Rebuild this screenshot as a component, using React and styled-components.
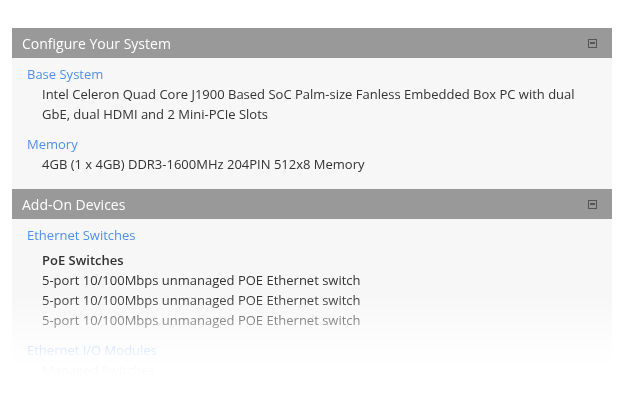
import React from "react";
import styled, { createGlobalStyle } from "styled-components";

const Global = createGlobalStyle`
  html, body { margin: 0; padding: 0; background: #fff; }
  body { font-family: "Open Sans", "Liberation Sans", sans-serif; }
`;

const Page = styled.div`
  height: 400px;
  overflow: hidden;
  padding: 28px 13px 0 12px;
  box-sizing: border-box;
  -webkit-mask-image: linear-gradient(to bottom, #000 0, #000 295px, rgba(0,0,0,0.35) 335px, rgba(0,0,0,0.08) 358px, rgba(0,0,0,0.015) 372px, transparent 388px);
  mask-image: linear-gradient(to bottom, #000 0, #000 295px, rgba(0,0,0,0.35) 335px, rgba(0,0,0,0.08) 358px, rgba(0,0,0,0.015) 372px, transparent 388px);
`;

const Panel = styled.div`
  background: #f7f7f7;
`;

const Header = styled.div`
  display: flex;
  align-items: center;
  justify-content: space-between;
  height: 30px;
  padding: 0 15px 0 10px;
  background: #999999;
  color: #fff;
  font-size: 14px;
`;

const Toggle = styled.span`
  display: flex;
  align-items: center;
  justify-content: center;
  width: 7px;
  height: 7px;
  border: 1px solid #555;
  &::after {
    content: "";
    width: 5px;
    height: 2px;
    background: #555;
  }
`;

const Body = styled.div`
  padding: 6px 15px 15px 15px;
`;

const Group = styled.div`
  & + & { margin-top: 10px; }
`;

const Label = styled.div`
  color: #4f8ff0;
  font-size: 13px;
  line-height: 20px;
`;

const Item = styled.div`
  padding-left: 15px;
  color: #333;
  font-size: 13px;
  line-height: 20px;
  font-weight: ${p => (p.bold ? 600 : 400)};
  margin-top: ${p => (p.gap ? "5px" : "0")};
`;

const sections = [
  {
    title: "Configure Your System",
    groups: [
      {
        label: "Base System",
        items: [
          { text: "Intel Celeron Quad Core J1900 Based SoC Palm-size Fanless Embedded Box PC with dual GbE, dual HDMI and 2 Mini-PCIe Slots" },
        ],
      },
      {
        label: "Memory",
        items: [{ text: "4GB (1 x 4GB) DDR3-1600MHz 204PIN 512x8 Memory" }],
      },
    ],
  },
  {
    title: "Add-On Devices",
    groups: [
      {
        label: "Ethernet Switches",
        items: [
          { text: "PoE Switches", bold: true, gap: true },
          { text: "5-port 10/100Mbps unmanaged POE Ethernet switch" },
          { text: "5-port 10/100Mbps unmanaged POE Ethernet switch" },
          { text: "5-port 10/100Mbps unmanaged POE Ethernet switch" },
        ],
      },
      {
        label: "Ethernet I/O Modules",
        items: [{ text: "Managed Switches" }],
      },
    ],
  },
];

export default function App() {
  return (
    <Page>
      <Global />
      <Panel>
        {sections.map(s => (
          <div key={s.title}>
            <Header>
              {s.title}
              <Toggle />
            </Header>
            <Body>
              {s.groups.map(g => (
                <Group key={g.label}>
                  <Label>{g.label}</Label>
                  {g.items.map((it, i) => (
                    <Item key={i} bold={it.bold} gap={it.gap}>{it.text}</Item>
                  ))}
                </Group>
              ))}
            </Body>
          </div>
        ))}
      </Panel>
    </Page>
  );
}
